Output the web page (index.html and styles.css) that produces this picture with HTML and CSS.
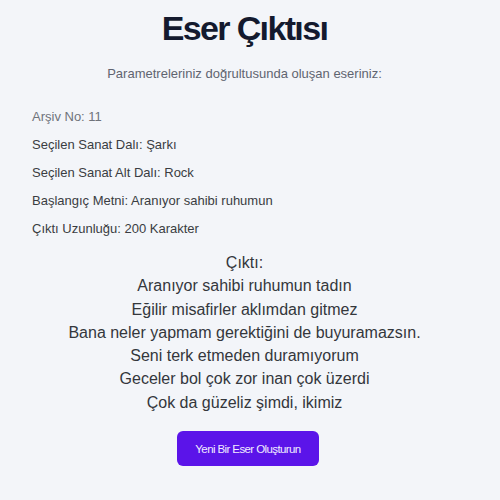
FILE: index.html
```html
<!DOCTYPE html>
<html lang="tr">
<head>
<meta charset="utf-8">
<link rel="stylesheet" href="styles.css">
</head>
<body>
<main class="page">
  <h1 class="title">Eser Çıktısı</h1>
  <p class="subtitle">Parametreleriniz doğrultusunda oluşan eseriniz:</p>
  <div class="params">
    <p class="param muted">Arşiv No: 11</p>
    <p class="param">Seçilen Sanat Dalı: Şarkı</p>
    <p class="param">Seçilen Sanat Alt Dalı: Rock</p>
    <p class="param">Başlangıç Metni: Aranıyor sahibi ruhumun</p>
    <p class="param">Çıktı Uzunluğu: 200 Karakter</p>
  </div>
  <div class="output">
    <p>Çıktı:</p>
    <p>Aranıyor sahibi ruhumun tadın</p>
    <p>Eğilir misafirler aklımdan gitmez</p>
    <p>Bana neler yapmam gerektiğini de buyuramazsın.</p>
    <p>Seni terk etmeden duramıyorum</p>
    <p>Geceler bol çok zor inan çok üzerdi</p>
    <p>Çok da güzeliz şimdi, ikimiz</p>
  </div>
  <div class="actions">
    <button class="btn">Yeni Bir Eser Oluşturun</button>
  </div>
</main>
</body>
</html>
```
FILE: styles.css
```css
html, body {
  margin: 0;
  padding: 0;
  background: #f3f5f9;
}
body {
  font-family: "Liberation Sans", Arial, sans-serif;
  color: #333;
}
.page {
  width: 500px;
  height: 500px;
  box-sizing: border-box;
  padding: 8px 43px 0 32px;
}
.title {
  margin: 0;
  text-align: center;
  font-size: 34px;
  font-weight: 700;
  letter-spacing: -1.65px;
  color: #141a2e;
  line-height: 40px;
}
.subtitle {
  margin: 17px 0 0;
  text-align: center;
  font-size: 13px;
  color: #5f6470;
  line-height: 18px;
}
.params {
  margin-top: 26px;
  display: flex;
  flex-direction: column;
  gap: 12px;
}
.param {
  margin: 0;
  font-size: 13px;
  line-height: 16px;
  color: #3a3d42;
}
.param.muted {
  color: #6f737b;
}
.output {
  margin-top: 14px;
  text-align: center;
  font-size: 16px;
  line-height: 23.3px;
  color: #34373c;
}
.output p {
  margin: 0;
}
.actions {
  display: flex;
  justify-content: center;
  margin-top: 17px;
  padding-left: 7px;
}
.btn {
  font-family: "Liberation Sans", Arial, sans-serif;
  font-size: 11.5px;
  letter-spacing: -0.6px;
  color: #f1ecff;
  background: #5b14e9;
  border: none;
  border-radius: 6px;
  width: 142px;
  height: 35px;
  padding: 0;
}
```
